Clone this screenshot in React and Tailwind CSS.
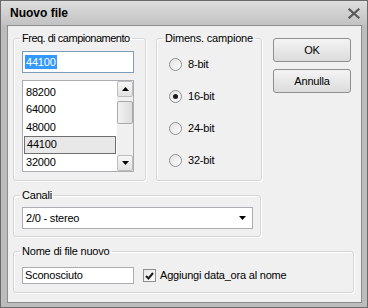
import React from 'react';

const font = { fontFamily: '"Liberation Sans", Arial, sans-serif' };

const rates = ['88200', '64000', '48000', '44100', '32000'];
const bits = ['8-bit', '16-bit', '24-bit', '32-bit'];

const Radio = ({ checked }) => (
  <span className="flex h-[13px] w-[13px] shrink-0 items-center justify-center rounded-full border border-[#8f8f8f] bg-gradient-to-br from-[#e4e4e4] to-[#fbfbfb]">
    {checked && <span className="h-[5px] w-[5px] rounded-full bg-[#1a1a1a]" />}
  </span>
);

const Group = ({ label, className, legendClass = '', children }) => (
  <fieldset className={`min-w-0 rounded-[3px] border border-[#d5d5d5] shadow-[inset_1px_1px_0_#ffffff,1px_1px_0_#ffffff] ${className}`}>
    <legend className={`ml-[6px] whitespace-nowrap px-[2px] leading-[13px] ${legendClass}`}>{label}</legend>
    {children}
  </fieldset>
);

const ArrowDown = () => (
  <svg width="7" height="4" viewBox="0 0 7 4"><path d="M0 0h7L3.5 4z" fill="#000" /></svg>
);

const ArrowUp = () => (
  <svg width="7" height="4" viewBox="0 0 7 4"><path d="M0 4h7L3.5 0z" fill="#000" /></svg>
);

export default function App() {
  return (
    <div style={font} className="flex h-[308px] w-[368px] flex-col border border-[#6a6a6a] bg-[#bcbcbc] text-[11px] tracking-[-0.2px] text-black">
      {/* title bar */}
      <div className="flex h-[24px] shrink-0 items-center justify-between bg-gradient-to-b from-[#dedede] to-[#c2c2c2] pl-[9px] pr-[7px]">
        <span className="text-[12px] font-bold leading-none tracking-normal">Nuovo file</span>
        <svg width="12" height="11" viewBox="0 0 12 11">
          <path d="M1.5 1.5l9 8M10.5 1.5l-9 8" stroke="#5a5a5a" strokeWidth="2.2" strokeLinecap="square" />
        </svg>
      </div>

      {/* client */}
      <div className="mb-[4px] ml-[6px] mr-[5px] flex flex-1 flex-col gap-[8px] border border-[#8c8c8c] bg-[#f0f0f0] pl-[5px] pt-[6px]">
        <div className="flex h-[149px]">
          <Group label="Freq. di campionamento" legendClass="tracking-[-0.5px]" className="h-[149px] w-[133px]">
            <div className="pl-[8px]">
              <div className="mt-[6px] flex h-[22px] w-[112px] items-center border border-[#7f9db9] bg-white pl-[2px]">
                <span className="bg-[#3399ff] px-px leading-[14px] text-white">44100</span>
              </div>
              <div className="mt-[7px] flex h-[92px] w-[112px] border border-[#abadb3] bg-white">
                <div className="flex flex-1 flex-col pt-[2px]">
                  {rates.map((r) => (
                    <div
                      key={r}
                      className={`mx-[1px] flex h-[18px] items-center pl-[2px] ${r === '44100' ? 'border border-[#6f6f6f] bg-[#e8e8e8] pl-[1px]' : ''}`}
                    >
                      {r}
                    </div>
                  ))}
                </div>
                <div className="flex w-[16px] flex-col bg-[#f0f0f0]">
                  <div className="flex h-[16px] items-center justify-center rounded-[2px] border border-[#bcbcbc] bg-gradient-to-b from-[#f7f7f7] to-[#e2e2e2]">
                    <ArrowUp />
                  </div>
                  <div className="mt-[4px] h-[23px] rounded-[2px] border border-[#a9a9a9] bg-gradient-to-r from-[#f2f2f2] to-[#dcdcdc]" />
                  <div className="flex-1" />
                  <div className="flex h-[16px] items-center justify-center rounded-[2px] border border-[#bcbcbc] bg-gradient-to-b from-[#f7f7f7] to-[#e2e2e2]">
                    <ArrowDown />
                  </div>
                </div>
              </div>
            </div>
          </Group>

          <Group label="Dimens. campione" className="ml-[10px] h-[149px] w-[106px]">
            <div className="flex flex-col pl-[12px] pt-[3px]">
              {bits.map((b) => (
                <div key={b} className="flex h-[32px] items-center gap-[6px]">
                  <Radio checked={b === '16-bit'} />
                  <span>{b}</span>
                </div>
              ))}
            </div>
          </Group>

          <div className="ml-[11px] mt-[6px] flex flex-col gap-[7px]">
            <button className="h-[24px] w-[78px] rounded-[3px] border border-[#8e8f8f] bg-gradient-to-b from-[#f4f4f4] to-[#dcdcdc]">OK</button>
            <button className="h-[24px] w-[78px] rounded-[3px] border border-[#8e8f8f] bg-gradient-to-b from-[#f4f4f4] to-[#dcdcdc]">Annulla</button>
          </div>
        </div>

        <Group label="Canali" className="h-[48px] w-[248px]">
          <div className="ml-[8px] mt-[5px] flex h-[22px] w-[231px] items-center justify-between border border-[#abadb3] bg-white pl-[3px] pr-[6px]">
            <span>2/0 - stereo</span>
            <ArrowDown />
          </div>
        </Group>

        <Group label="Nome di file nuovo" className="h-[48px] w-[341px]">
          <div className="ml-[8px] mt-[9px] flex items-center">
            <div className="flex h-[17px] w-[112px] items-center border border-[#abadb3] bg-white pl-[2px]">Sconosciuto</div>
            <span className="ml-[9px] flex h-[13px] w-[13px] items-center justify-center border border-[#8f8f8f] bg-gradient-to-br from-[#e6e6e6] to-[#ffffff]">
              <svg width="9" height="8" viewBox="0 0 9 8"><path d="M1 4l2.5 2.5L8 1" stroke="#1c1c1c" strokeWidth="2" fill="none" /></svg>
            </span>
            <span className="ml-[4px]">Aggiungi data_ora al nome</span>
          </div>
        </Group>
      </div>
    </div>
  );
}
